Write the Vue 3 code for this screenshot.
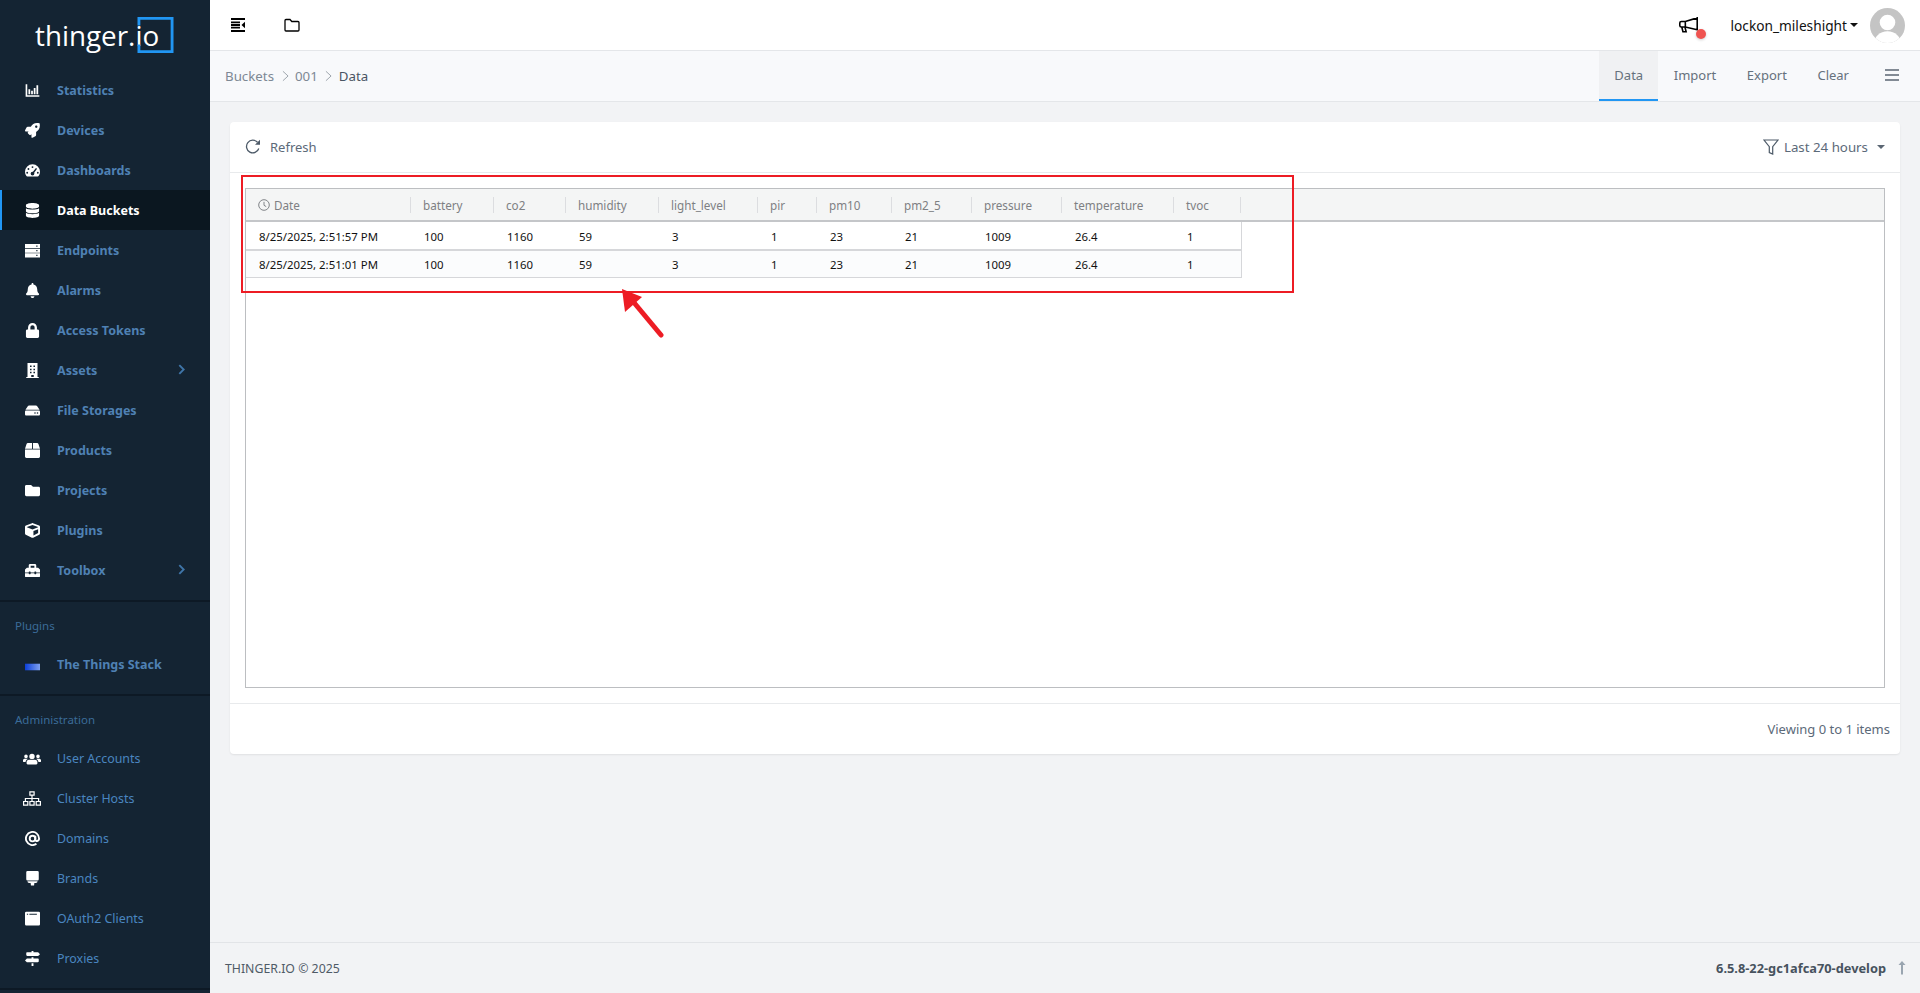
<script setup>
const P = {
  chart: { vb: '0 0 24 24', d: 'M1 2h2.600v17.400H23V22H1zM5.500 10h2.800v8H5.500zM9.800 12.500h2.800V18H9.800zM14 8h2.800v10H14zM18.300 3.500h2.800V18h-2.800z' },
  rocket: { vb: '0 0 512 512', d: 'M505.12 19.094c-1.189-5.543-6.675-11.029-12.218-12.218C460.708 0 435.448 0 410.292 0 306.836 0 244.8 55.332 198.48 128H94.027c-16.352.014-35.727 11.983-43.044 26.604L2.905 250.734a28.169 28.169 0 0 0-2.905 12.316c.002 13.251 10.743 23.992 24.027 24h100.939l-21.857 21.857c-12.5 12.5-14.3 35.441 0 49.741l45.255 45.254c12.28 12.28 35.215 14.525 49.741 0l21.857-21.856V483c.011 13.25 10.752 23.99 24 24 4.1-.03 8.43-1.09 12.316-2.905l96.062-48.024c14.621-7.317 26.59-26.692 26.604-43.044V309.53c72.5-46.4 128-108.65 128-211.7.1-25.277.1-50.534-6.824-78.736zM384 168c-22.091 0-40-17.909-40-40s17.909-40 40-40 40 17.909 40 40-17.909 40-40 40z' },
  gauge: { vb: '0 0 24 24', d: 'M12 2A12 12 0 0 0 0 14c0 2.500.7 4.700 2 6.500.4.600 1 .9 1.700.9h16.600c.7 0 1.300-.3 1.700-.9 1.300-1.800 2-4 2-6.500A12 12 0 0 0 12 2zm0 3a1.500 1.500 0 1 1 0 3 1.500 1.500 0 0 1 0-3zM5.500 8a1.500 1.500 0 1 1 0 3 1.500 1.500 0 0 1 0-3zm-2 6a1.500 1.500 0 1 1 0 3 1.500 1.500 0 0 1 0-3zm17 0a1.500 1.500 0 1 1 0 3 1.500 1.500 0 0 1 0-3zm-3-6.200 1.800 1.200-4.600 6.500c.2.400.3.800.3 1.300a3 3 0 1 1-3-3c.2 0 .5 0 .7.100z', rule: 'evenodd' },
  db: { vb: '0 0 448 512', d: 'M448 73.143v45.714C448 159.143 347.667 192 224 192S0 159.143 0 118.857V73.143C0 32.857 100.333 0 224 0s224 32.857 224 73.143zM448 176v102.857C448 319.143 347.667 352 224 352S0 319.143 0 278.857V176c48.125 33.143 136.208 48.572 224 48.572S399.874 209.143 448 176zm0 160v102.857C448 479.143 347.667 512 224 512S0 479.143 0 438.857V336c48.125 33.143 136.208 48.572 224 48.572S399.874 369.143 448 336z' },
  server: { vb: '0 0 24 24', d: 'M0 1.500h24v6.500H0zM0 9h24v6.500H0zM0 16.500h24v6.500H0zM18 3.800v2h2v-2zM18 11.200v2h2v-2zM18 18.800v2h2v-2z', rule: 'evenodd' },
  bell: { vb: '0 0 448 512', d: 'M224 512c35.32 0 63.97-28.65 63.97-64H160.03c0 35.35 28.65 64 63.97 64zm215.39-149.71c-19.32-20.76-55.47-51.99-55.47-154.29 0-77.7-54.48-139.9-127.94-155.16V32c0-17.67-14.32-32-31.98-32s-31.98 14.33-31.98 32v20.84C118.56 68.1 64.08 130.3 64.08 208c0 102.3-36.15 133.53-55.47 154.29-6 6.45-8.66 14.16-8.61 21.71.11 16.4 12.98 32 32.1 32h383.8c19.12 0 32-15.6 32.1-32 .05-7.55-2.61-15.27-8.61-21.71z' },
  lock: { vb: '0 0 448 512', d: 'M400 224h-24v-72C376 68.2 307.8 0 224 0S72 68.2 72 152v72H48c-26.5 0-48 21.5-48 48v192c0 26.5 21.5 48 48 48h352c26.5 0 48-21.5 48-48V272c0-26.5-21.5-48-48-48zm-104 0H152v-72c0-39.7 32.3-72 72-72s72 32.3 72 72v72z' },
  building: { vb: '0 0 20 24', d: 'M2 0h16v22.500h2V24H0v-1.500h2zM6 4v2.500h2.500V4zM11.500 4v2.500H14V4zM6 9v2.500h2.500V9zM11.500 9v2.500H14V9zM6 14v2.500h2.500V14zM11.500 14v2.500H14V14zM8 19v3.500h4V19z', rule: 'evenodd' },
  hdd: { vb: '0 0 576 512', d: 'M576 304v96c0 26.51-21.49 48-48 48H48c-26.51 0-48-21.49-48-48v-96c0-26.51 21.49-48 48-48h480c26.51 0 48 21.49 48 48zm-48-80a79.557 79.557 0 0 1 30.777 6.165L462.25 85.374A48.003 48.003 0 0 0 422.311 64H153.689a48 48 0 0 0-39.938 21.374L17.223 230.165A79.557 79.557 0 0 1 48 224h480zm-48 96c-17.673 0-32 14.327-32 32s14.327 32 32 32 32-14.327 32-32-14.327-32-32-32zm-96 0c-17.673 0-32 14.327-32 32s14.327 32 32 32 32-14.327 32-32-14.327-32-32-32z' },
  box: { vb: '0 0 512 512', d: 'M509.5 184.6L458.9 32.8C452.4 13.2 434.1 0 413.4 0H272v192h238.7c-.4-2.5-.4-5-1.2-7.4zM240 0H98.6c-20.7 0-39 13.2-45.5 32.8L2.5 184.6c-.8 2.4-.8 4.9-1.2 7.4H240V0zM0 224v240c0 26.5 21.5 48 48 48h416c26.5 0 48-21.5 48-48V224H0z' },
  folder: { vb: '0 0 512 512', d: 'M464 128H272l-64-64H48C21.49 64 0 85.49 0 112v288c0 26.51 21.49 48 48 48h416c26.51 0 48-21.49 48-48V176c0-26.51-21.49-48-48-48z' },
  cube: { vb: '0 0 512 512', d: 'M239.1 6.3l-208 78c-18.7 7-31.1 25-31.1 45v225.1c0 18.2 10.3 34.8 26.5 42.9l208 104c13.5 6.8 29.4 6.800 42.9 0l208-104c16.3-8.100 26.5-24.800 26.5-42.900V129.300c0-20-12.400-37.900-31.100-44.900l-208-78C262 2.200 250 2.200 239.100 6.300zM256 68.400l192 72v1.100l-192 78-192-78v-1.100l192-72zm32 356V275.500l160-65v133.900l-160 80z' },
  toolbox: { vb: '0 0 512 512', d: 'M502.63 214.63l-45.25-45.25c-6-6-14.14-9.37-22.63-9.37H384V80c0-26.51-21.49-48-48-48H176c-26.51 0-48 21.49-48 48v80H77.25c-8.49 0-16.62 3.37-22.63 9.37L9.37 214.63c-6 6-9.37 14.14-9.37 22.63V320h128v-16c0-8.84 7.16-16 16-16h32c8.84 0 16 7.16 16 16v16h128v-16c0-8.84 7.16-16 16-16h32c8.84 0 16 7.16 16 16v16h128v-82.75c0-8.48-3.37-16.62-9.37-22.62zM320 160H192V96h128v64zm64 208c0 8.84-7.16 16-16 16h-32c-8.84 0-16-7.16-16-16v-16H192v16c0 8.84-7.16 16-16 16h-32c-8.84 0-16-7.16-16-16v-16H0v96c0 17.67 14.33 32 32 32h448c17.67 0 32-14.33 32-32v-96H384v16z' },
  users: { vb: '0 0 30 24', d: 'M15 4a4.500 4.500 0 1 1 0 9 4.500 4.500 0 0 1 0-9zM5 5.500a3 3 0 1 1 0 6 3 3 0 0 1 0-6zm20 0a3 3 0 1 1 0 6 3 3 0 0 1 0-6zM10 14h10c2.500 0 4 1.800 4 4v2c0 1-.7 1.800-1.800 1.800H7.800C6.700 21.800 6 21 6 20v-2c0-2.200 1.500-4 4-4zM3 12.500h3.500c.6 0 1.100.2 1.500.5-2 1-3.500 2.800-3.700 5H1.500C.6 18 0 17.400 0 16.500V15c0-1.400 1.300-2.500 3-2.500zm20.500 0H27c1.700 0 3 1.100 3 2.500v1.500c0 .9-.6 1.500-1.500 1.500h-2.800c-.2-2.200-1.700-4-3.700-5 .4-.3.900-.5 1.500-.5z' },
  network: { vb: '0 0 30 24', d: 'M10.500 0h9v7.500h-3.500v3.500H27v5h3v8h-9v-8h4v-3H16v3h3.500v8h-9v-8H14v-3H5v3h4v8H0v-8h3v-5h11V7.500h-3.500zM12.500 2v3.500h5V2zM2 18v4h5v-4zM12.500 18v4h5v-4zM23 18v4h5v-4z', rule: 'evenodd' },
  brand: { vb: '0 0 20 24', d: 'M2 0h16a2 2 0 0 1 2 2v11a2 2 0 0 1-2 2H2a2 2 0 0 1-2-2V2a2 2 0 0 1 2-2zM2 16.500h16c0 1.500-1 2.500-2.500 2.500H13l-.5 4h-5l-.5-4H4.500C3 19 2 18 2 16.500z' },
  window: { vb: '0 0 24 22', d: 'M2 0h20a2 2 0 0 1 2 2v18a2 2 0 0 1-2 2H2a2 2 0 0 1-2-2V2a2 2 0 0 1 2-2zM3 3.500V5h2V3.500zM7 3.500V5h12V3.500z', rule: 'evenodd' },
  signs: { vb: '0 0 24 24', d: 'M10.500 0h3v2H21l3 3-3 3H3.500C2.700 8 2 7.300 2 6.500v-3C2 2.700 2.700 2 3.500 2h7zM10.500 10h3v2h7c.8 0 1.500.7 1.500 1.500v3c0 .8-.7 1.500-1.500 1.500H3l-3-3 3-3h7.500zM10.500 19.500h3V24h-3z' },
  megaphone: { vb: '0 0 24 20', d: 'M23 0v17M23 1 8 5.500H3a2 2 0 0 0-2 2v3a2 2 0 0 0 2 2h5L23 16M8 5.500v7M3.500 12.500 5 18.500h4l-1.500-6' }
}
const mainNav = [
  { t: 'Statistics', i: 'chart' }, { t: 'Devices', i: 'rocket' }, { t: 'Dashboards', i: 'gauge' },
  { t: 'Data Buckets', i: 'db', active: true }, { t: 'Endpoints', i: 'server' }, { t: 'Alarms', i: 'bell' },
  { t: 'Access Tokens', i: 'lock' }, { t: 'Assets', i: 'building', more: true }, { t: 'File Storages', i: 'hdd' },
  { t: 'Products', i: 'box' }, { t: 'Projects', i: 'folder' }, { t: 'Plugins', i: 'cube' },
  { t: 'Toolbox', i: 'toolbox', more: true }
]
const adminNav = [
  { t: 'User Accounts', i: 'users', wide: true }, { t: 'Cluster Hosts', i: 'network', wide: true },
  { t: 'Domains', i: 'at' }, { t: 'Brands', i: 'brand' }, { t: 'OAuth2 Clients', i: 'window' }, { t: 'Proxies', i: 'signs' }
]
const cols = [
  { k: 'Date', w: 165 }, { k: 'battery', w: 83 }, { k: 'co2', w: 72 }, { k: 'humidity', w: 93 },
  { k: 'light_level', w: 99 }, { k: 'pir', w: 59 }, { k: 'pm10', w: 75 }, { k: 'pm2_5', w: 80 },
  { k: 'pressure', w: 90 }, { k: 'temperature', w: 112 }, { k: 'tvoc', w: 67 }
]
const rows = [
  ['8/25/2025, 2:51:57 PM', '100', '1160', '59', '3', '1', '23', '21', '1009', '26.4', '1'],
  ['8/25/2025, 2:51:01 PM', '100', '1160', '59', '3', '1', '23', '21', '1009', '26.4', '1']
]
</script>

<template>
  <div class="app">
    <aside class="side">
      <div class="logo"><span class="logo-text">thinger.io</span><svg class="logo-box" viewBox="0 0 38 38"><path d="M1.500 9V1.500h35v35h-35V29" fill="none" stroke="#2196f3" stroke-width="3"/></svg></div>
      <nav class="group">
        <a v-for="n in mainNav" :key="n.t" class="item" :class="{ active: n.active }">
          <span class="ic"><svg :viewBox="P[n.i].vb"><path :d="P[n.i].d" :fill-rule="P[n.i].rule || 'nonzero'" fill="#fff"/></svg></span>
          <span class="lbl">{{ n.t }}</span>
          <svg v-if="n.more" class="chev" viewBox="0 0 8 12"><path d="M1.500 1 6.500 6l-5 5" fill="none" stroke="#3f75a8" stroke-width="2.200"/></svg>
        </a>
      </nav>
      <section class="group sect">
        <div class="cap">Plugins</div>
        <a class="item">
          <span class="ic"><svg viewBox="0 0 16 8" class="tts"><defs><linearGradient id="g"><stop offset="0" stop-color="#0b3fd8"/><stop offset="1" stop-color="#7fa0ee"/></linearGradient></defs><rect width="16" height="7" y="0.500" fill="url(#g)"/></svg></span>
          <span class="lbl">The Things Stack</span>
        </a>
      </section>
      <section class="group sect">
        <div class="cap">Administration</div>
        <a v-for="n in adminNav" :key="n.t" class="item admin">
          <span class="ic" :class="{ wide: n.wide }">
            <svg v-if="n.i === 'at'" viewBox="0 0 24 24" fill="none" stroke="#fff" stroke-width="3"><circle cx="12" cy="12" r="4.500"/><path d="M16.500 7.500v6c0 3.500 6 3.500 6-1.500a10.500 10.500 0 1 0-4.200 8.400"/></svg>
            <svg v-else :viewBox="P[n.i].vb"><path :d="P[n.i].d" :fill-rule="P[n.i].rule || 'nonzero'" fill="#fff"/></svg>
          </span>
          <span class="lbl">{{ n.t }}</span>
        </a>
      </section>
    </aside>

    <div class="main">
      <header class="top">
        <svg class="t-ic" viewBox="0 0 14 14"><path d="M0 1h14M0 4.300h9M0 7h9M0 9.700h9M0 13h14" stroke="#000" stroke-width="1.800" fill="none"/><path d="M14 3.800v6.400L10.500 7z" fill="#000"/></svg>
        <svg class="t-folder" viewBox="0 0 16 14"><path d="M2 1.500h4l1.800 2H14c.6 0 1 .4 1 1V12c0 .6-.4 1-1 1H2c-.6 0-1-.4-1-1V2.500c0-.6.4-1 1-1z" fill="none" stroke="#000" stroke-width="1.300"/></svg>
        <div class="spacer"></div>
        <span class="mega">
          <svg viewBox="0 0 24 20"><path :d="P.megaphone.d" fill="none" stroke="#000" stroke-width="2"/></svg>
          <i class="dot"></i>
        </span>
        <span class="user">lockon_mileshight</span><i class="caret dark"></i>
        <svg class="avatar" viewBox="0 0 36 36"><defs><clipPath id="av"><circle cx="18" cy="18" r="18"/></clipPath></defs><g clip-path="url(#av)"><rect width="36" height="36" fill="#c4c4c4"/><circle cx="18" cy="15" r="8" fill="#fff"/><ellipse cx="18" cy="37" rx="14" ry="13" fill="#fff"/></g></svg>
      </header>

      <div class="sub">
        <div class="crumbs">
          <span>Buckets</span>
          <svg viewBox="0 0 8 14"><path d="M1 1.500 7 7l-6 5.500" fill="none" stroke="#9aa1a9" stroke-width="1.100"/></svg>
          <span>001</span>
          <svg viewBox="0 0 8 14"><path d="M1 1.500 7 7l-6 5.500" fill="none" stroke="#9aa1a9" stroke-width="1.100"/></svg>
          <span class="cur">Data</span>
        </div>
        <div class="tabs">
          <a class="tab on">Data</a><a class="tab">Import</a><a class="tab">Export</a><a class="tab">Clear</a>
          <svg class="burger" viewBox="0 0 14 12"><path d="M0 1h14M0 6h14M0 11h14" stroke="#5b6673" stroke-width="1.700"/></svg>
        </div>
      </div>

      <main class="content">
        <div class="card">
          <div class="c-head">
            <svg class="refresh" viewBox="0 0 16 16"><path d="M13.800 9.500A6.300 6.300 0 1 1 12.500 3.300" fill="none" stroke="#4d5a68" stroke-width="1.300"/><path d="M15 .8v5h-5z" fill="#4d5a68"/></svg>
            <span class="refresh-t">Refresh</span>
            <div class="spacer"></div>
            <svg class="filter" viewBox="0 0 16 16"><path d="M1 1h14L9.700 7.700V15l-3.400-1.500V7.700z" fill="none" stroke="#4d5a68" stroke-width="1.200"/></svg>
            <span class="range">Last 24 hours</span><i class="caret grey"></i>
          </div>
          <div class="c-body">
            <div class="grid">
              <div class="g-head">
                <div v-for="(c, i) in cols" :key="c.k" class="th" :style="{ width: c.w + 'px' }">
                  <svg v-if="i === 0" class="clock" viewBox="0 0 12 12"><circle cx="6" cy="6" r="5.300" fill="none" stroke="#808488" stroke-width="1"/><path d="M6 2.800V6.300l2.200 1.300" fill="none" stroke="#808488" stroke-width="1"/></svg>
                  <span>{{ c.k }}</span>
                </div>
              </div>
              <div v-for="(r, ri) in rows" :key="ri" class="tr" :class="{ alt: ri === 1 }">
                <div v-for="(v, i) in r" :key="i" class="td" :style="{ width: cols[i].w + 'px' }">{{ v }}</div>
              </div>
            </div>
          </div>
          <div class="c-foot">Viewing 0 to 1 items</div>
          <div class="mark"></div>
          <svg class="arrow" viewBox="0 0 50 50"><path d="M45 47 15 11" stroke="#ed1c24" stroke-width="5" stroke-linecap="round"/><path d="M6 1 26 9 9 24z" fill="#ed1c24"/></svg>
        </div>
      </main>

      <footer class="foot">
        <span>THINGER.IO © 2025</span>
        <div class="spacer"></div>
        <b>6.5.8-22-gc1afca70-develop</b>
        <svg class="up" viewBox="0 0 8 14"><path d="M4 13.500V2" stroke="#9aa5b0" stroke-width="2"/><path d="M4 0 7.500 4h-7z" fill="#9aa5b0"/></svg>
      </footer>
    </div>
  </div>
</template>

<style>
html, body { margin: 0; padding: 0; background: #f2f3f5; }
</style>

<style scoped>
.app { display: flex; height: 993px; overflow: hidden; font-family: "Noto Sans", "Open Sans", sans-serif; font-size: 13px; }
.spacer { flex: 1; }
.side { width: 210px; flex: none; background: #142433; color: #4f81b4; }
.logo { height: 70px; position: relative; }
.logo-text { position: absolute; left: 35px; top: 12px; font-family: "Open Sans", sans-serif; font-weight: 500; font-size: 27.800px; color: #fff; line-height: 46px; }
.logo-box { position: absolute; left: 137px; top: 17px; width: 37px; height: 36px; }
.group { padding-bottom: 10px; }
.sect { border-top: 2px solid #0d1925; }
.sect:last-child { border-bottom: 2px solid #0d1925; }
.cap { height: 42px; line-height: 18px; padding: 15px 0 0 15px; box-sizing: border-box; font-size: 11.500px; color: #3b6c99; }
.item { display: flex; align-items: center; height: 40px; font-weight: 700; font-size: 12.500px; padding-left: 17px; position: relative; }
.item.admin { font-weight: 400; font-size: 12.400px; color: #4a86c0; }
.item.active { background: #0b1720; color: #fff; box-shadow: inset 2px 0 0 #2196f3; }
.ic { width: 30px; margin-right: 10px; display: flex; justify-content: center; flex: none; }
.ic svg { width: 15px; height: 15px; }
.ic.wide svg { width: 18px; }
.ic svg.tts { height: 8px; margin-top: 5px; }
.chev { width: 7px; height: 11px; position: absolute; left: 178px; top: 14px; }

.main { flex: 1; min-width: 0; display: flex; flex-direction: column; background: #f2f3f5; }
.top { height: 50px; flex: none; background: #fff; border-bottom: 1px solid #e4e6e9; display: flex; align-items: center; padding: 0 15px 0 21px; }
.t-ic { width: 14px; height: 14px; }
.t-folder { width: 16px; height: 14px; margin-left: 39px; }
.mega { position: relative; width: 19px; height: 16px; }
.mega svg { width: 19px; height: 16px; display: block; }
.dot { position: absolute; left: 17px; top: 12px; width: 10px; height: 10px; border-radius: 50%; background: #ef5350; box-shadow: 0 1px 3px rgba(0,0,0,.2); }
.user { margin-left: 33px; color: #111; font-size: 13.700px; }
.caret { width: 0; height: 0; border-left: 4px solid transparent; border-right: 4px solid transparent; border-top: 4px solid #333; }
.caret.dark { margin-left: 3px; border-top-color: #111; }
.caret.grey { margin-left: 9px; border-top-color: #5b6673; }
.avatar { width: 35px; height: 35px; margin-left: 12px; }

.sub { height: 50px; flex: none; background: #f8f9fb; border-bottom: 1px solid #e4e6e9; display: flex; align-items: center; justify-content: space-between; padding: 0 21px 0 15px; font-size: 13.300px; }
.crumbs { display: flex; align-items: center; color: #7d8894; }
.crumbs svg { width: 7px; height: 12px; margin: 0 6.500px 0 7.500px; }
.crumbs .cur { color: #4a5563; }
.tabs { display: flex; align-items: center; height: 100%; font-size: 13px; }
.tab { height: 100%; line-height: 49px; padding: 0 15.300px; color: #66717d; box-sizing: border-box; }
.tab.on { background: #f0f1f3; border-bottom: 2px solid #2196f3; }
.tab:last-of-type { padding-right: 17px; }
.burger { width: 14px; height: 12px; margin-left: 19px; margin-top: -3px; }

.content { flex: 1; padding: 20px 20px 0; }
.card { position: relative; height: 632px; background: #fff; border-radius: 4px; box-shadow: 0 1px 2px rgba(0,0,0,.08); display: flex; flex-direction: column; }
.c-head { height: 50px; flex: none; border-bottom: 1px solid #e8eaec; display: flex; align-items: center; padding: 0 15px; color: #5c6a79; }
.refresh { width: 16px; height: 16px; }
.refresh-t { margin-left: 9px; }
.filter { width: 16px; height: 16px; margin-right: 5px; }
.range { font-size: 13.300px; }
.c-body { height: 500px; padding: 15px; flex: none; border-bottom: 1px solid #e8eaec; }
.grid { height: 498px; border: 1px solid #bcbec1; font-size: 11.400px; }
.g-head { height: 30px; padding-top: 1px; display: flex; align-items: center; background: #f4f5f5; border-bottom: 2px solid #c4c6c9; color: #7e8083; font-size: 11.700px; }
.th { height: 16px; line-height: 16px; padding-left: 12px; box-sizing: border-box; border-right: 1px solid #dcdde0; display: flex; align-items: center; }
.clock { width: 12px; height: 12px; margin-right: 4px; }
.tr { width: 995px; height: 26px; padding-top: 1px; display: flex; align-items: center; box-sizing: content-box; border-bottom: 2px solid #d6d7da; border-right: 1px solid #d6d7da; color: #111; background: #fff; }
.tr.alt { height: 25px; border-bottom-width: 1px; background: #fbfcfd; }
.td { padding-left: 13px; box-sizing: border-box; white-space: nowrap; }
.c-foot { flex: 1; display: flex; align-items: center; justify-content: flex-end; padding-right: 10px; color: #5c6a79; }
.mark { position: absolute; left: 11px; top: 53px; width: 1049px; height: 114px; border: 2px solid #ed1c24; pointer-events: none; }
.arrow { position: absolute; left: 386px; top: 166px; width: 50px; height: 50px; }

.foot { height: 50px; flex: none; border-top: 1px solid #e2e4e7; display: flex; align-items: center; padding: 0 14px 0 15px; color: #4f5a66; font-size: 12.300px; }
.foot b { font-weight: 700; color: #47525e; font-size: 12.800px; }
.up { width: 8px; height: 14px; margin-left: 12px; }
</style>
